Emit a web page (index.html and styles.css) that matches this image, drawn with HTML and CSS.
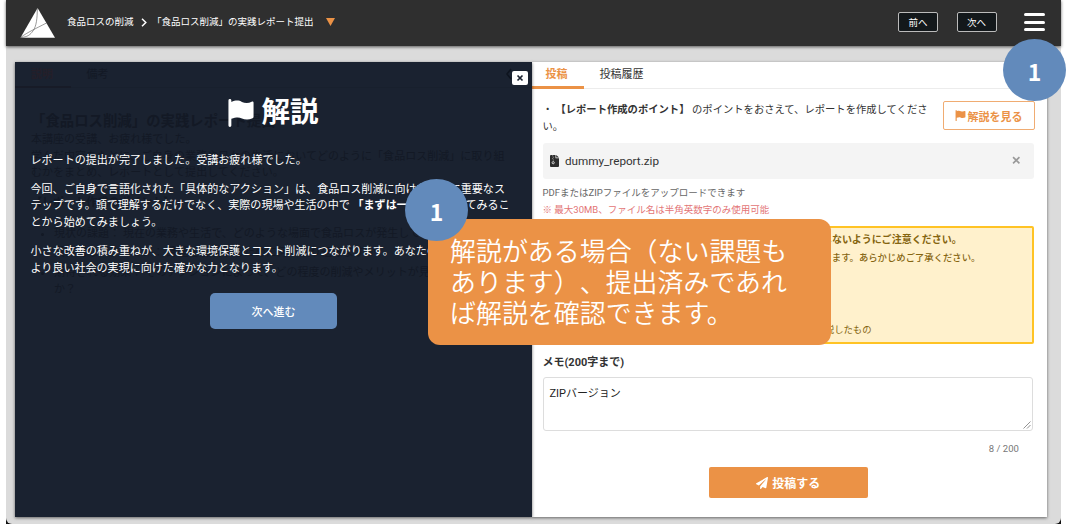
FILE: index.html
```html
<!DOCTYPE html>
<html lang="ja">
<head>
<meta charset="utf-8">
<title>レポート提出</title>
<link rel="stylesheet" href="styles.css">
</head>
<body>
<div class="window">
  <header class="topbar">
    <svg class="logo" viewBox="0 0 36 32"><path d="M17.6 1 35 30.700H.5Z" fill="#fff"/><path d="M17.300 1c0 11-1 18-4 22.500-3 4.500-6 6.500-12.500 7M.5 30.500C8 25 15 22 26.500 16" fill="none" stroke="#555" stroke-width=".6"/></svg>
    <nav class="crumbs">
      <span>食品ロスの削減</span>
      <svg class="chev" viewBox="0 0 6 9"><path d="M1 .8 4.800 4.500 1 8.200" fill="none" stroke="#fff" stroke-width="1.500"/></svg>
      <span>「食品ロス削減」の実践レポート提出</span>
      <svg class="caret" viewBox="0 0 9 8"><path d="M0 0h9L4.500 8Z" fill="#eb9246"/></svg>
    </nav>
    <div class="actions">
      <button class="nav-btn">前へ</button>
      <button class="nav-btn">次へ</button>
      <div class="menu"><i></i><i></i><i></i></div>
    </div>
  </header>
  <main class="panels">
    <section class="left">
      <div class="ghost">
        <div class="ghost-tabs"><span class="ghost-on">説明</span><span>備考</span><svg viewBox="0 0 6 12"><path d="M5 1 1 6l4 5" fill="none" stroke="#0e141e" stroke-width="1.500"/></svg></div>
        <div class="ghost-body">
          <h2>「食品ロス削減」の実践レポート提出</h2>
          <p>本講座の受講、お疲れ様でした。<br>学んだ内容をもとに、ご自身の業務や日々の生活においてどのように「食品ロス削減」に取り組<br>むかをまとめ、レポートとして提出してください。</p>
          <p><b>【レポート作成のポイント】</b></p>
          <ul>
            <li>現状の課題： 現在の業務や生活で、どのような場面で食品ロスが発生していますか</li>
            <li>具体的なアクション： 課題を解決するために何に取り組みますか</li>
            <li>期待される効果： そのアクションによって、どの程度の削減やメリットが見込めます<br>か？</li>
          </ul>
        </div>
      </div>
      <div class="modal">
        <button class="close"><svg viewBox="0 0 8 8"><path d="m1.500 1.500 5 5m0-5-5 5" stroke="#1a2230" stroke-width="1.700"/></svg></button>
        <h1><svg viewBox="0 0 26 29"><path d="M0 1.500Q0 0 1.500 0T3 1.500V3c5-2 8-1.500 11 0s7 1.500 10-.2c1.200-.5 2 0 2 1.200v14.500c0 .8-.4 1.200-1 1.500-4 1.800-8 1.500-11 .2-3-1.500-6-1.500-11 .3v7q0 1.500-1.500 1.500T0 27.500Z" fill="#fff"/></svg>解説</h1>
        <p>レポートの提出が完了しました。受講お疲れ様でした。</p>
        <p>今回、ご自身で言語化された「具体的なアクション」は、食品ロス削減に向けた非常に重要なス<br>テップです。頭で理解するだけでなく、実際の現場や生活の中で <b>「まずは一つ」</b> 実践してみるこ<br>とから始めてみましょう。</p>
        <p>小さな改善の積み重ねが、大きな環境保護とコスト削減につながります。あなたの一歩が、<br>より良い社会の実現に向けた確かな力となります。</p>
        <button class="next">次へ進む</button>
      </div>
    </section>
    <section class="right">
      <div class="tabs"><span class="tab on">投稿</span><span class="tab">投稿履歴</span></div>
      <div class="form">
        <div class="intro">
          <p>・ <b>【レポート作成のポイント】</b> のポイントをおさえて、レポートを作成してください。</p>
          <button class="view"><svg viewBox="0 0 26 29"><path d="M0 1.500Q0 0 1.500 0T3 1.500V3c5-2 8-1.500 11 0s7 1.500 10-.2c1.200-.5 2 0 2 1.200v14.500c0 .8-.4 1.200-1 1.500-4 1.800-8 1.500-11 .2-3-1.500-6-1.500-11 .3v7q0 1.500-1.500 1.500T0 27.500Z" fill="#eb9246"/></svg>解説を見る</button>
        </div>
        <div class="file">
          <svg class="zip" viewBox="0 0 9 12"><path d="M1 0h4.500v3.200H9V11a1 1 0 0 1-1 1H1a1 1 0 0 1-1-1V1a1 1 0 0 1 1-1Z" fill="#2c2c2c"/><path d="M6.200 0 9 2.600H6.200Z" fill="#2c2c2c"/><path d="M2 .8h1.200M2.800 2.200H4M2 3.600h1.200M2.800 5H4" stroke="#aaa" stroke-width=".7"/><circle cx="3.200" cy="7.700" r="1.100" fill="none" stroke="#f4f4f4" stroke-width=".8"/></svg>
          <span>dummy_report.zip</span>
          <svg class="x" viewBox="0 0 8 8"><path d="m1 1 6 6m0-6L1 7" stroke="#999" stroke-width="1.500"/></svg>
        </div>
        <p class="hint">PDFまたはZIPファイルをアップロードできます</p>
        <p class="hint limit">※ 最大30MB、ファイル名は半角英数字のみ使用可能</p>
        <div class="warn">
          <p class="strong">個人情報や機密情報、社外秘の情報などは絶対に記載・添付しないようにご注意ください。</p>
          <p class="mid">※不適切な内容が確認された場合は、事務局で削除させていただきます。あらかじめご了承ください。</p>
          <p class="last">・他の受講者のレポートや市販の教材の内容を転載または解説したもの</p>
        </div>
        <label class="memo-label">メモ(200字まで)</label>
        <div class="memo">ZIPバージョン<svg viewBox="0 0 8 8"><path d="M.5 7.500l7-7M4 7.500 7.500 4" stroke="#777" stroke-width=".8"/></svg></div>
        <div class="count">8 / 200</div>
        <button class="submit"><svg viewBox="0 0 512 512"><path d="M476 3.200 12.500 270.600c-18.100 10.400-15.800 35.600 2.200 43.200L121 358.400l287.300-253.200c5.500-4.900 13.300 2.600 8.600 8.300L176 407v80.500c0 23.600 28.500 32.900 42.500 15.800L282 426l124.600 52.200c14.200 6 30.400-2.900 33-18.200l72-432C515 7.800 493.300-6.800 476 3.200z" fill="#fff"/></svg>投稿する</button>
      </div>
    </section>
  </main>
</div>
<div class="callout">解説がある場合（ない課題も<br>あります）、提出済みであれ<br>ば解説を確認できます。</div>
<div class="badge badge-menu">1</div>
<div class="badge badge-note">1</div>
</body>
</html>
```
FILE: styles.css
```css
* { box-sizing: border-box; }
body {
  margin: 0;
  height: 524px;
  padding: 0 10px 0 5.5px;
  overflow: hidden;
  background: #fff;
  font-family: Roboto, "Noto Sans CJK JP", sans-serif;
  font-size: 11px;
  color: #333;
  text-spacing-trim: space-all;
  position: relative;
}
p, h1, h2, ul { margin: 0; padding: 0; }
button { font-family: inherit; padding: 0; border: 0; display: flex; align-items: center; justify-content: center; white-space: nowrap; }
svg { display: block; flex: none; }

.window { width: 1055px; height: 524px; background: linear-gradient(#dbdbdb 500px, #111 500px); display: flex; flex-direction: column; }
.topbar {
  height: 46px; flex: none; background: #2f2f2f; box-shadow: 0 1px 3px rgba(0,0,0,.6);
  display: flex; align-items: center; padding: 0 15.5px 2px 14.500px; position: relative; z-index: 1;
}
.logo { width: 36px; height: 32px; margin-top: 1px; }
.crumbs { display: flex; align-items: center; margin-left: 11px; color: #fff; font-size: 9.500px; line-height: 14px; white-space: nowrap; }
.chev { width: 6px; height: 9px; margin: 1px 5.500px 0 7px; }
.caret { width: 9px; height: 8px; margin-left: 12.500px; }
.actions { margin-left: auto; display: flex; align-items: center; }
.nav-btn { width: 40px; height: 20px; border: 1px solid #bbb; border-radius: 2px; background: #13181b; color: #fff; font-size: 9.500px; margin-right: 18.500px; }
.menu { width: 21px; margin-left: 9px; display: flex; flex-direction: column; gap: 4.500px; }
.menu i { height: 3px; border-radius: 1.500px; background: #fff; }

.panels { flex: 1; display: flex; padding: 16px 13.500px 7px 9.500px; background: #dbdbdb; border-radius: 0 0 6px 6px; }
.left { width: 517px; flex: none; position: relative; background: #1a2230; box-shadow: 0 1px 3px rgba(0,0,0,.55); overflow: hidden; }
.ghost { color: #131925; line-height: 16.600px; white-space: nowrap; }
.ghost-tabs { height: 26px; display: flex; align-items: center; border-bottom: 1px solid #18202d; }
.ghost-tabs span { width: 55.500px; height: 26px; line-height: 25px; padding-left: 16px; }
.ghost-tabs .ghost-on { color: #241f29; border-bottom: 2px solid #171b27; font-weight: bold; }
.ghost-tabs svg { width: 6px; height: 12px; margin: -2px 20px 0 auto; }
.ghost-body { padding: 23px 0 0 16px; font-size: 11.040px; }
.ghost h2 { font-size: 14.400px; line-height: 21px; }
.ghost p { margin-bottom: 13px; }
.ghost p + p { margin-bottom: 14.500px; }
.ghost ul { padding-left: 23px; }
.ghost li { margin-bottom: 3px; }

.modal { position: absolute; inset: 0; padding: 0 15.500px; color: #fff; font-size: 11.060px; line-height: 16.600px; white-space: nowrap; }
.modal .close { position: absolute; top: 9px; right: 4.500px; width: 16px; height: 14px; border-radius: 2px; background: #fff; }
.close svg { width: 8px; height: 8px; }
.modal h1 { display: flex; align-items: center; justify-content: center; height: 40px; margin: 31px 0 19.500px; font-size: 28.500px; padding-right: 0; }
.modal h1 svg { width: 26px; height: 28px; margin-right: 7px; margin-top: -1px; }
.modal p { margin-bottom: 12.700px; }
.next { width: 127px; height: 36px; margin: 16px auto 0; border-radius: 5px; background: #628abb; color: #fff; font-size: 11px; font-weight: 500; }

.right { flex: 1; background: #fff; box-shadow: 0 1px 3px rgba(0,0,0,.55); }
.tabs { height: 27px; display: flex; border-bottom: 1px solid #ececec; font-size: 11px; line-height: 25.500px; }
.tab { padding: 0 16px 0 13.500px; }
.tab.on { height: 27px; width: 52px; border-bottom: 3px solid #eb9246; color: #eb9246; font-weight: bold; margin-right: 2px; }
.form { padding: 12px 13px 0 10.500px; }
.intro { display: flex; height: 42px; }
.intro p { width: 392px; font-size: 10.320px; line-height: 17px; flex: none; }
.view { width: 92px; height: 29px; margin-left: auto; margin-right: -.5px; border: 1px solid #f0ac72; border-radius: 2px; background: #fff; color: #eb9246; font-size: 11px; font-weight: bold; }
.view svg { width: 11px; height: 11px; margin-right: 2px; }
.file { height: 36px; border-radius: 3px; background: #f4f4f4; display: flex; align-items: center; padding: 0 13.500px 1px 7.500px; font-size: 11.700px; }
.zip { width: 9px; height: 12px; margin-right: 6px; }
.x { width: 8.500px; height: 8.500px; margin-left: auto; }
.hint { font-size: 9.500px; line-height: 17px; color: #666; white-space: nowrap; }
.file + .hint { margin-top: 5px; }
.limit { color: #e37576; }
.warn { height: 118px; margin-top: 8px; border: 2px solid #ffc324; border-radius: 2px; background: #fff1cc; color: #856510; padding: 3px 7px; white-space: nowrap; font-size: 9.350px; line-height: 17px; }
.warn .strong { font-size: 10.030px; font-weight: bold; line-height: 18px; }
.warn .mid { font-weight: 500; }
.warn .last { padding-left: 21px; margin-top: 55px; }
.memo-label { display: block; font-size: 11px; font-weight: bold; line-height: 16px; margin: 10.500px 0 6.500px; }
.memo { height: 54px; margin-right: 1px; border: 1px solid #ddd; border-radius: 3px; padding: 8px 6px 6px; line-height: 16px; font-size: 11px; color: #222; display: flex; justify-content: space-between; }
.memo svg { width: 8px; height: 8px; align-self: flex-end; margin: 0 -5px -5px 0; }
.count { margin: 10px 15px 0 0; text-align: right; font-size: 9.500px; line-height: 15px; color: #777; letter-spacing: .05px; }
.submit { width: 159px; height: 31px; margin: 11px auto 0; border-radius: 2px; background: #eb9246; color: #fff; font-size: 12px; font-weight: bold; }
.submit svg { width: 12px; height: 12px; margin-right: 4px; }

/* Annotations floating over the application window */
.callout { position: absolute; left: 427.500px; top: 219px; width: 403.500px; height: 125.500px; border-radius: 12px; background: #eb9246; color: #fff; padding: 14.500px 0 0 22.500px; font: 350 25.950px/31px "Noto Sans CJK JP", sans-serif; white-space: nowrap; }
.badge { position: absolute; z-index: 2; width: 63px; height: 62px; border-radius: 50%; background: #628abb; color: #fff; font: bold 23px/65px "Noto Sans CJK JP", sans-serif; text-align: center; }
.badge-menu { left: 1003px; top: 39px; }
.badge-note { left: 405px; top: 179px; }
```
